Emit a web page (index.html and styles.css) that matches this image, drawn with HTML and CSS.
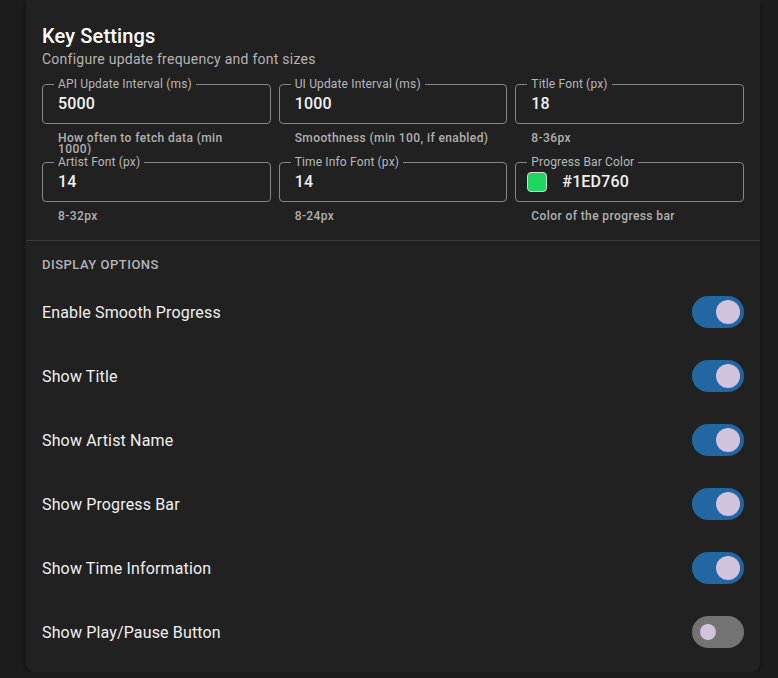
FILE: index.html
```html
<!DOCTYPE html>
<html>
<head>
<meta charset="utf-8">
<link rel="stylesheet" href="styles.css">
</head>
<body>
<div class="card">
  <div class="top">
    <h2 class="title">Key Settings</h2>
    <p class="subtitle">Configure update frequency and font sizes</p>
    <div class="grid">
      <div class="cell">
        <div class="field"><span class="label">API Update Interval (ms)</span><span class="value">5000</span></div>
        <div class="helper">How often to fetch data (min<br>1000)</div>
      </div>
      <div class="cell">
        <div class="field"><span class="label">UI Update Interval (ms)</span><span class="value">1000</span></div>
        <div class="helper">Smoothness (min 100, if enabled)</div>
      </div>
      <div class="cell">
        <div class="field"><span class="label">Title Font (px)</span><span class="value">18</span></div>
        <div class="helper">8-36px</div>
      </div>
      <div class="cell">
        <div class="field"><span class="label">Artist Font (px)</span><span class="value">14</span></div>
        <div class="helper">8-32px</div>
      </div>
      <div class="cell">
        <div class="field"><span class="label">Time Info Font (px)</span><span class="value">14</span></div>
        <div class="helper">8-24px</div>
      </div>
      <div class="cell">
        <div class="field field-color"><span class="label">Progress Bar Color</span><span class="swatch"></span><span class="value">#1ED760</span></div>
        <div class="helper">Color of the progress bar</div>
      </div>
    </div>
  </div>
  <div class="divider"></div>
  <div class="options">
    <div class="section-title">DISPLAY OPTIONS</div>
    <div class="row"><span class="row-label">Enable Smooth Progress</span><span class="switch on"><span class="knob"></span></span></div>
    <div class="row"><span class="row-label">Show Title</span><span class="switch on"><span class="knob"></span></span></div>
    <div class="row"><span class="row-label">Show Artist Name</span><span class="switch on"><span class="knob"></span></span></div>
    <div class="row"><span class="row-label">Show Progress Bar</span><span class="switch on"><span class="knob"></span></span></div>
    <div class="row"><span class="row-label">Show Time Information</span><span class="switch on"><span class="knob"></span></span></div>
    <div class="row"><span class="row-label">Show Play/Pause Button</span><span class="switch off"><span class="knob"></span></span></div>
  </div>
</div>
</body>
</html>
```
FILE: styles.css
```css
* { box-sizing: border-box; }
html, body {
  margin: 0;
  padding: 0;
  background: #1c1c1c;
  font-family: Roboto, "Noto Sans", sans-serif;
  color: #fff;
}
.card {
  margin-left: 26px;
  width: 734px;
  background: #212121;
  border-radius: 0 0 8px 8px;
  box-shadow: 0 2px 4px rgba(0,0,0,0.35);
}
.top {
  padding: 24px 16px 0;
}
.title {
  margin: 0;
  font-size: 20px;
  line-height: 24px;
  font-weight: 500;
  letter-spacing: 0.15px;
  color: #fff;
}
.subtitle {
  margin: 1px 0 0;
  font-size: 14px;
  line-height: 20px;
  letter-spacing: 0.25px;
  color: #b5b5b5;
}
.grid {
  margin-top: 15px;
  display: grid;
  grid-template-columns: repeat(3, 1fr);
  column-gap: 8px;
  grid-auto-rows: 78px;
}
.field {
  position: relative;
  height: 40px;
  border: 1px solid #858585;
  border-radius: 4px;
  display: flex;
  align-items: center;
  padding: 0 15px;
}
.label {
  position: absolute;
  left: 11px;
  top: -8px;
  padding: 0 4px;
  background: #212121;
  font-size: 12px;
  line-height: 14px;
  letter-spacing: 0.15px;
  color: #b8b8b8;
}
.value {
  font-size: 16px;
  font-weight: 500;
  letter-spacing: 0.15px;
  color: #f2f2f2;
  line-height: 24px;
}
.field-color {
  padding-left: 11px;
}
.swatch {
  width: 20px;
  height: 20px;
  border-radius: 4px;
  background: #1ed760;
  border: 1px solid #d8d8d8;
  margin-right: 15px;
}
.helper {
  margin: 9px 16px 0;
  font-size: 12px;
  line-height: 11px;
  font-weight: 500;
  letter-spacing: 0.4px;
  color: #b0b0b0;
}
.divider {
  height: 1px;
  background: #383838;
}
.options {
  padding: 16px 16px 8px;
}
.section-title {
  font-size: 13px;
  line-height: 16px;
  font-weight: 500;
  letter-spacing: 0.5px;
  color: #b5b5b5;
  margin-bottom: 7px;
}
.row {
  height: 64px;
  display: flex;
  align-items: center;
  justify-content: space-between;
}
.row-label {
  font-size: 16px;
  font-weight: 400;
  letter-spacing: 0.15px;
  color: #f0f0f0;
}
.switch {
  width: 52px;
  height: 32px;
  border-radius: 16px;
  display: flex;
  align-items: center;
}
.switch.on {
  background: #2267a2;
  justify-content: flex-end;
  padding-right: 4px;
}
.switch.off {
  background: #737373;
  padding-left: 8px;
}
.knob {
  border-radius: 50%;
  background: #d0c3dc;
}
.switch.on .knob {
  width: 24px;
  height: 24px;
}
.switch.off .knob {
  width: 16px;
  height: 16px;
}
```
